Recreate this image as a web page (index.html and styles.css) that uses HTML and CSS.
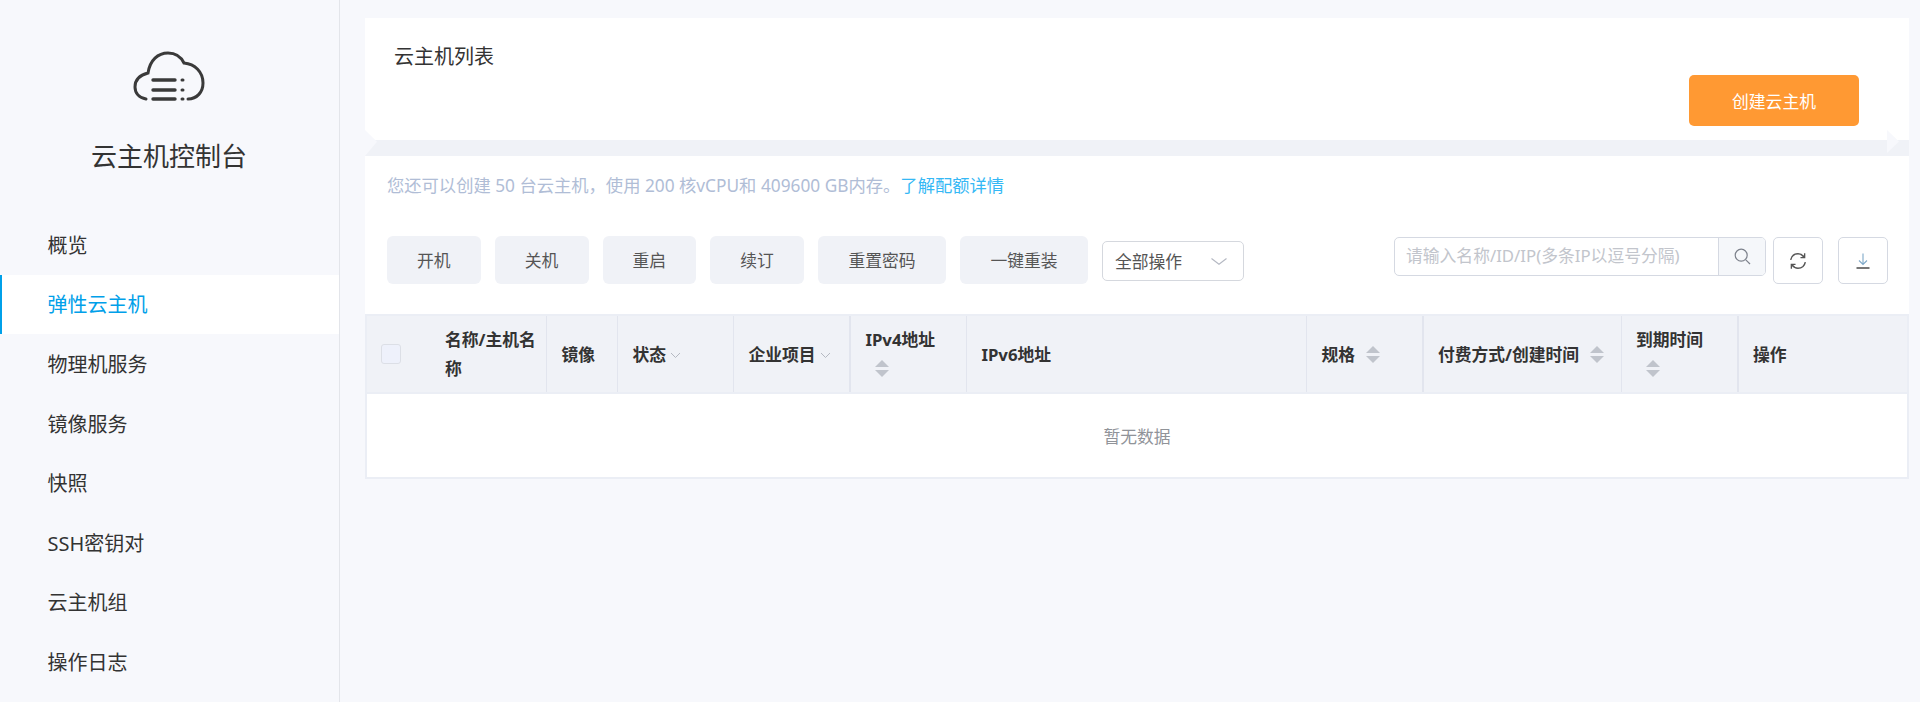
FILE: index.html
```html
<!DOCTYPE html>
<html lang="zh-CN">
<head>
    <meta charset="UTF-8">
    <meta name="viewport" content="width=device-width, initial-scale=1.0">
    <title>云主机控制台</title>
    <link rel="stylesheet" href="styles.css">
</head>
<body>
    <aside class="sidebar">
        <div class="brand">
            <svg class="brand-icon" width="72" height="52" viewBox="0 0 72 52" fill="none" stroke="#3a3a3a" stroke-width="3" stroke-linecap="round">
                <path d="M13 49 C6 48 2 43 2 37 C2 30 7 25 15 23 C17 10 25 3 35 3 C42 3 48 7 51 13 C62 14 70 22 70 33 C70 42 64 49 55 49"></path>
                <path d="M20 30H42M20 40H42M20 49H42" stroke-width="3.4"></path>
                <path d="M49 30H50M49 40H50M49 49H50" stroke-width="3"></path>
            </svg>
            <div class="brand-title">云主机控制台</div>
        </div>
        <nav class="menu">
            <a class="menu-item">概览</a>
            <a class="menu-item active">弹性云主机</a>
            <a class="menu-item">物理机服务</a>
            <a class="menu-item">镜像服务</a>
            <a class="menu-item">快照</a>
            <a class="menu-item">SSH密钥对</a>
            <a class="menu-item">云主机组</a>
            <a class="menu-item">操作日志</a>
        </nav>
    </aside>

    <main class="main">
        <section class="head-card">
            <div class="head-title">云主机列表</div>
            <button class="create-btn">创建云主机</button>
        </section>
        <div class="band"></div>

        <section class="list-card">
            <p class="notice">您还可以创建 50 台云主机，使用 200 核vCPU和 409600 GB内存。<a class="notice-link">了解配额详情</a></p>

            <div class="toolbar">
                <div class="actions">
                    <button class="act-btn">开机</button>
                    <button class="act-btn">关机</button>
                    <button class="act-btn">重启</button>
                    <button class="act-btn">续订</button>
                    <button class="act-btn wide">重置密码</button>
                    <button class="act-btn wide">一键重装</button>
                    <div class="select">
                        <span>全部操作</span>
                        <svg width="16" height="7" viewBox="0 0 16 7" fill="none" stroke="#b4b8c2" stroke-width="1.1"><path d="M0.5 0.5L8 6.3L15.5 0.5"></path></svg>
                    </div>
                </div>
                <div class="tools">
                    <div class="search">
                        <span class="search-text">请输入名称/ID/IP(多条IP以逗号分隔)</span>
                        <span class="search-btn">
                            <svg width="17" height="17" viewBox="0 0 17 17" fill="none" stroke="#7d828c" stroke-width="1.2"><circle cx="7.2" cy="7.2" r="6"></circle><path d="M11.8 11.8L16 16"></path></svg>
                        </span>
                    </div>
                    <button class="icon-btn">
                        <svg width="18" height="18" viewBox="0 0 16 16" fill="none" stroke="#555" stroke-width="1.3"><path d="M1.5 7C2.2 3.8 4.8 1.6 8 1.6C10.2 1.6 12 2.6 13.3 4.4"></path><path d="M14.5 9C13.8 12.2 11.2 14.4 8 14.4C5.8 14.4 4 13.4 2.7 11.6"></path><path d="M13.9 1.2V5H10.2" stroke-width="1.2"></path><path d="M2.1 14.8V11H5.8" stroke-width="1.2"></path></svg>
                    </button>
                    <button class="icon-btn">
                        <svg width="14" height="16" viewBox="0 0 14 16" fill="none" stroke-width="1.1"><path d="M7 0.5V11M3 7.5L7 11.5L11 7.5" stroke="#7fa9c9"></path><path d="M0.5 15H13.5" stroke="#555" stroke-width="1.6"></path></svg>
                    </button>
                </div>
            </div>

            <table class="grid">
                <colgroup>
                    <col class="c-check"><col class="c-name"><col class="c-image"><col class="c-status"><col class="c-project"><col class="c-ipv4"><col class="c-ipv6"><col class="c-spec"><col class="c-pay"><col class="c-expire"><col>
                </colgroup>
                <thead>
                    <tr>
                        <th class="no-line"><span class="check"></span></th>
                        <th>名称/主机名称</th>
                        <th>镜像</th>
                        <th>状态<svg class="chev" width="11" height="7" viewBox="0 0 11 7" fill="none" stroke="#b5b9c2"><path d="M1 1L5.5 5.5L10 1"></path></svg></th>
                        <th>企业项目<svg class="chev" width="11" height="7" viewBox="0 0 11 7" fill="none" stroke="#b5b9c2"><path d="M1 1L5.5 5.5L10 1"></path></svg></th>
                        <th class="thick">IPv4地址<br><span class="sort sort-line"></span></th>
                        <th>IPv6地址</th>
                        <th>规格<span class="sort"></span></th>
                        <th class="thick">付费方式/创建时间<span class="sort"></span></th>
                        <th>到期时间<br><span class="sort sort-line"></span></th>
                        <th class="thick">操作</th>
                    </tr>
                </thead>
                <tbody>
                    <tr><td class="empty" colspan="11">暂无数据</td></tr>
                </tbody>
            </table>
        </section>
    </main>
</body>
</html>
```

FILE: styles.css
```css
* { box-sizing: border-box; }
html, body { height: 100%; }
body { margin: 0; display: flex; height: 702px; overflow: hidden; background: #f7f8fc; color: #333; font-family: "Noto Sans", "Noto Sans CJK SC", sans-serif; font-size: 16.8px; }
button { font-family: inherit; border: none; cursor: pointer; padding: 0; }

/* 左侧菜单 */
.sidebar { width: 340px; flex: none; border-right: 1px solid #e3e5ea; }
.brand { height: 215px; display: flex; flex-direction: column; align-items: center; padding-top: 50px; padding-right: 1px; }
.brand-icon { display: block; }
.brand-title { margin-top: 37px; font-size: 26px; line-height: 34px; color: #333; }
.menu { display: flex; flex-direction: column; }
.menu-item { height: 59.5px; padding: 1px 0 0 47.5px; line-height: 59.5px; font-size: 20px; color: #333; }
.menu-item.active { background: #fff; color: #00a0e9; border-left: 2px solid #00a0e9; padding: 0 0 0 45.5px; }

/* 右侧内容 */
.main { flex: 1; padding: 18px 11px 0 25px; }
.head-card { position: relative; height: 122px; padding: 28px 29px 0; background: #fff; }
.head-title { font-size: 20px; line-height: 22px; color: #333; }
.create-btn { position: absolute; right: 50px; top: 57px; width: 170px; height: 51px; background: #ff9933; color: #fff; font-size: 16.8px; border-radius: 5px; }
.band { position: relative; height: 16px; background: #f0f2f7; }
.band::before { content: ""; position: absolute; left: 0; top: -10px; width: 12px; height: 26px; background: #f7f8fc; clip-path: polygon(0 0, 100% 45%, 0 100%); }
.band::after { content: ""; position: absolute; right: 10px; top: -10px; width: 12px; height: 23px; background: #f7f8fc; clip-path: polygon(0 0, 100% 50%, 0 100%); }

.list-card { background: #fff; height: 322px; }
.notice { margin: 0; padding: 18px 22px 0; line-height: 24px; font-size: 17.3px; color: #b0bdd6; }
.notice-link { color: #35b8f5; }

.toolbar { display: flex; justify-content: space-between; align-items: flex-start; padding: 38px 21px 0 22px; }
.actions { display: flex; align-items: center; gap: 14px; }
.act-btn { width: 93.75px; height: 48px; background: #f0f2f7; color: #555; font-size: 16.8px; border-radius: 6px; }
.act-btn.wide { width: 128px; }
.select { width: 142px; height: 40px; margin-top: 2px; display: flex; align-items: center; justify-content: space-between; padding: 0 16px 0 12px; background: #fff; border: 1px solid #d5d8de; border-radius: 5px; color: #555; font-size: 16.8px; }
.tools { display: flex; align-items: flex-start; gap: 7px; margin-top: 1px; }
.search { width: 372px; height: 39px; display: flex; border: 1px solid #d5d9e2; border-radius: 5px; overflow: hidden; }
.search-text { flex: 1; padding-left: 11px; line-height: 36px; color: #c2c5cc; font-size: 16.8px; white-space: nowrap; }
.search-btn { width: 47px; display: flex; align-items: center; justify-content: center; background: #f5f7fa; border-left: 1px solid #d5d9e2; }
.icon-btn { width: 50px; height: 47px; display: flex; align-items: center; justify-content: center; background: #fff; border: 1px solid #d5d9e2; border-radius: 5px; }
.icon-btn + .icon-btn { margin-left: 8px; }

/* 表格 */
.grid { width: 100%; margin-top: 30px; table-layout: fixed; border-collapse: collapse; }
.c-check { width: 64.5px; }
.c-name { width: 116px; }
.c-image { width: 71px; }
.c-status { width: 116px; }
.c-project { width: 116.5px; }
.c-ipv4 { width: 116.5px; }
.c-ipv6 { width: 340px; }
.c-spec { width: 116px; }
.c-pay { width: 198.5px; }
.c-expire { width: 116.5px; }
.grid th { height: 78px; padding: 0 6px 0 14.4px; background: #f0f2f7; border-top: 2px solid #ebeef5; border-right: 1px solid #e2e5ee; border-bottom: 2px solid #ebeef5; text-align: left; font-size: 16.8px; line-height: 29px; font-weight: bold; color: #333; }
.grid th:first-child { border-left: 2px solid #ebeef5; }
.grid th:last-child { border-right: 2px solid #ebeef5; }
.grid th.no-line { border-right: none; padding: 0 0 0 14px; }
.grid th.thick { border-left: 2px solid #e2e5ee; }
.check { display: block; width: 20px; height: 20px; background: #eef1fb; border: 1px solid #dcdfe6; border-radius: 3px; }
.chev { margin-left: 4px; vertical-align: 2px; }

.sort { position: relative; display: inline-block; width: 14px; height: 17px; margin-left: 11px; vertical-align: -2px; }
.sort-line { margin-top: 5px; margin-left: 10px; }
.sort::before, .sort::after { content: ""; position: absolute; left: 0; border-left: 7px solid transparent; border-right: 7px solid transparent; }
.sort::before { top: 0; border-bottom: 7.5px solid #c0c4cc; }
.sort::after { bottom: 0; border-top: 7.5px solid #c0c4cc; }

.empty { height: 85px; text-align: center; color: #909399; font-size: 16.8px; border: 2px solid #ebeef5; border-top: none; }
```
